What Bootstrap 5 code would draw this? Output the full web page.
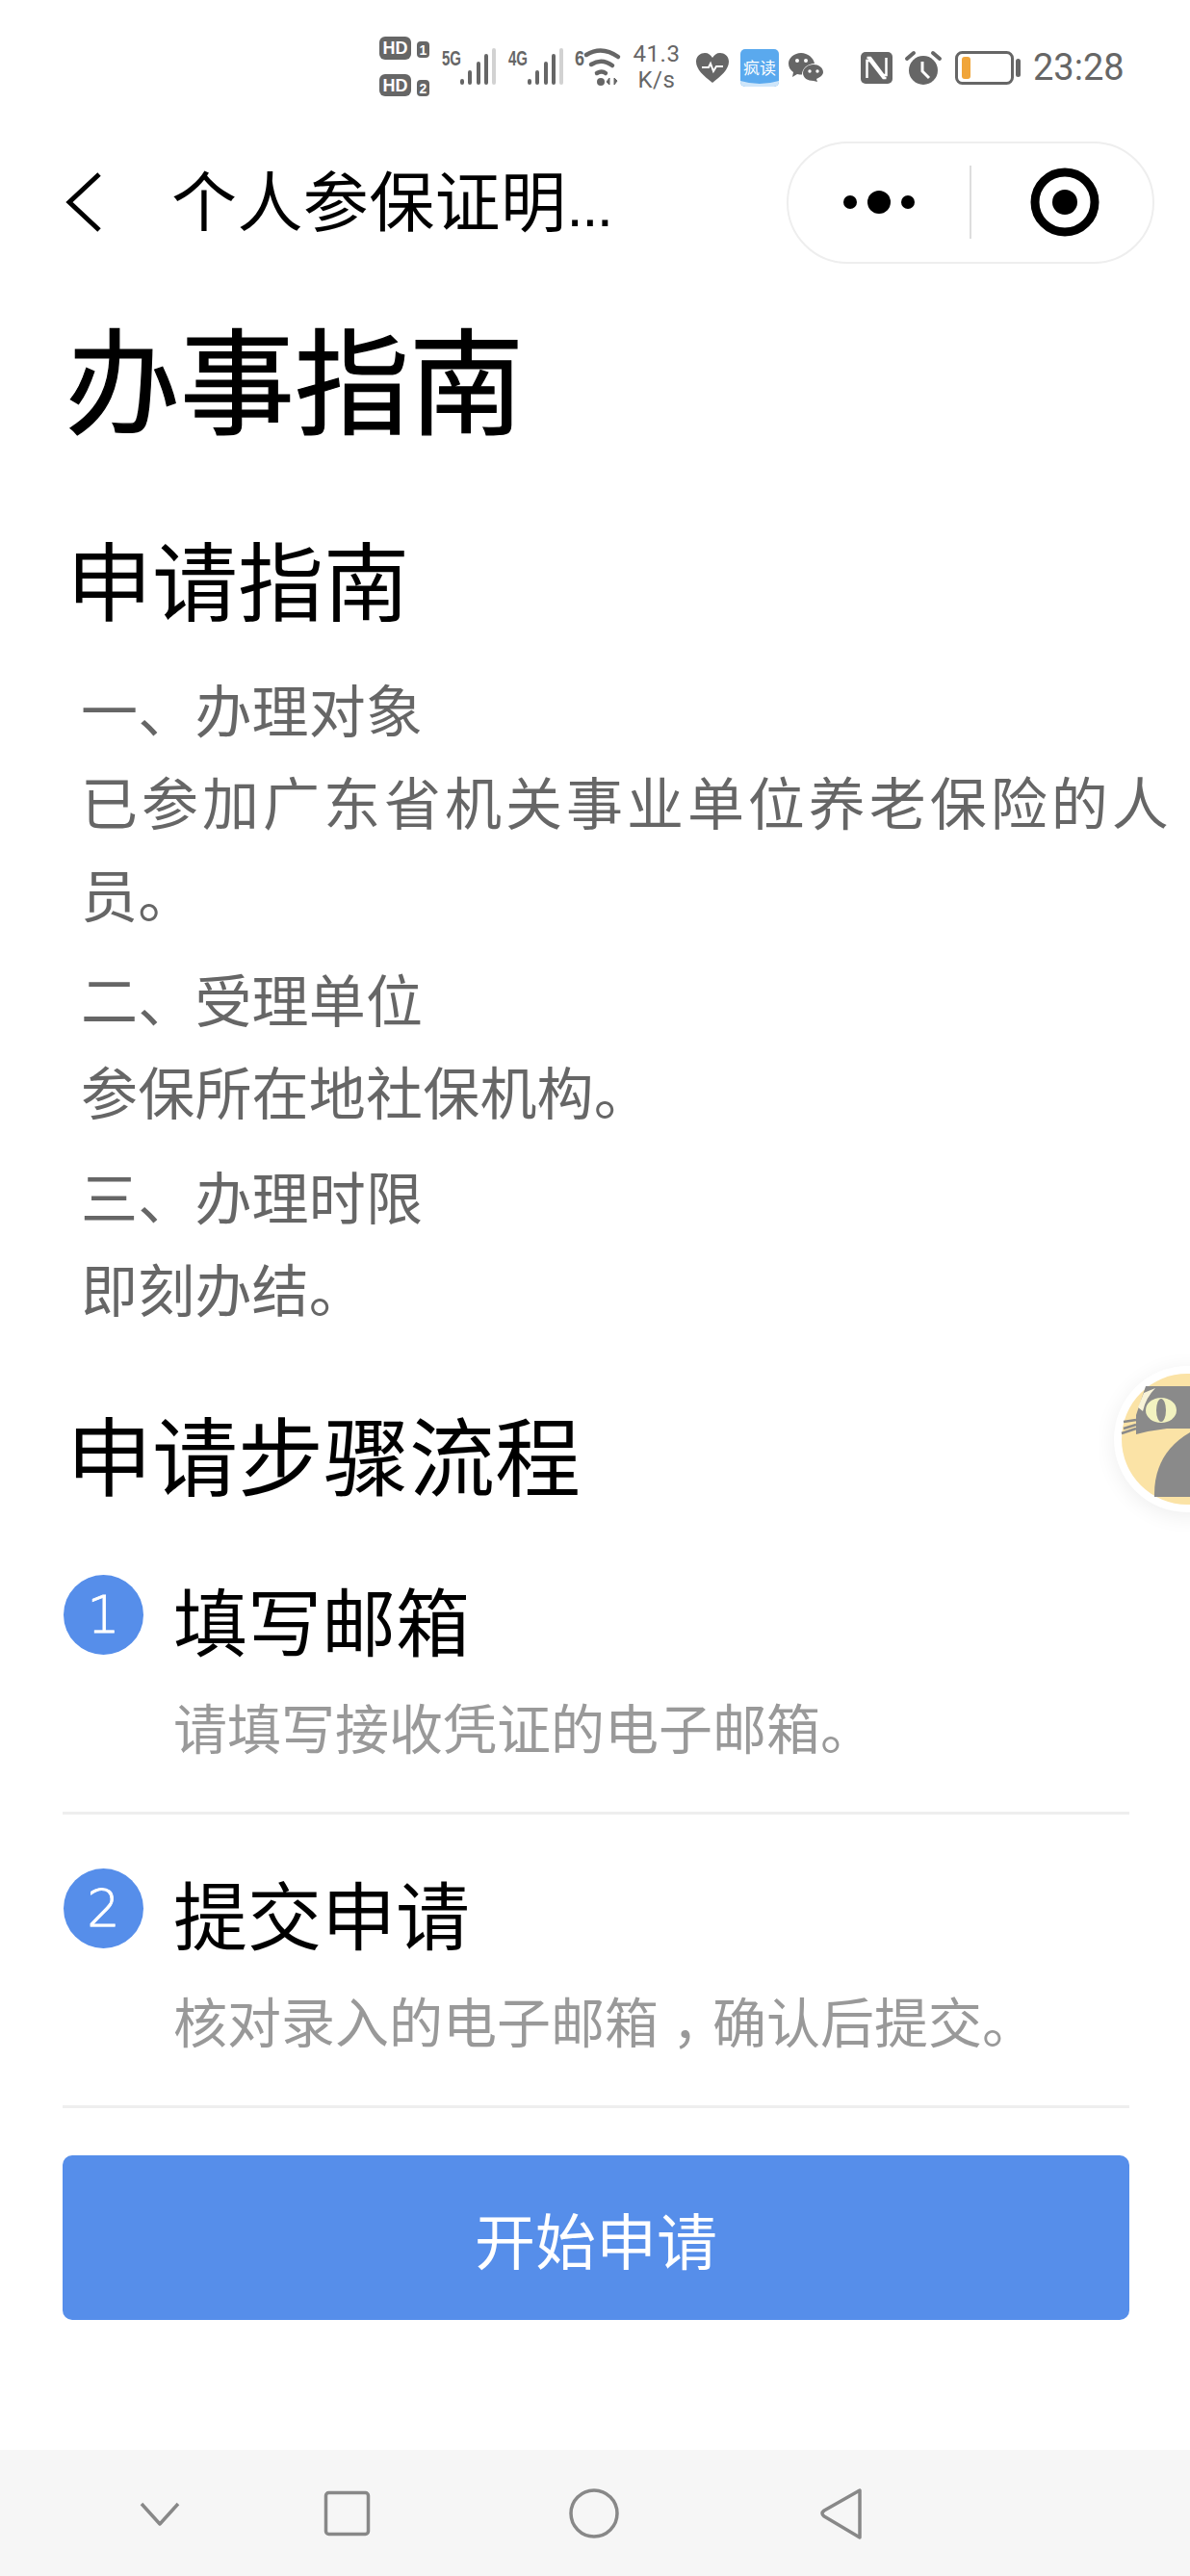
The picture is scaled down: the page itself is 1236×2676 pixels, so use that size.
<!DOCTYPE html>
<html lang="zh-CN">
<head>
    <meta charset="UTF-8">
    <meta name="viewport" content="width=device-width, initial-scale=1.0">
    <title>办事指南</title>
    <link href="https://cdn.jsdelivr.net/npm/bootstrap@5.3.0/dist/css/bootstrap.min.css" rel="stylesheet">
    <style>
        html, body { height: 100%; }
        body {
            background: #fff;
            color: #000;
            font-family: "Noto Sans CJK SC", "Liberation Sans", sans-serif;
            overflow: hidden;
        }
        .page-wrap { height: 2676px; position: relative; overflow: hidden; }

        /* status bar */
        .status-strip { height: 140px; padding-right: 68px; color: #666; }
        .status-strip svg { display: block; flex: none; overflow: visible; }
        .status-strip svg text { font-family: "Liberation Sans", sans-serif; fill: #666; }
        .ml-10 { margin-left: 10px; }
        .ml-12 { margin-left: 12px; }
        .ml-13 { margin-left: 13px; }
        .ml-14 { margin-left: 14px; }
        .ml-16 { margin-left: 16px; }
        .ml-38 { margin-left: 38px; }
        .net-speed {
            width: 50px; margin-left: 14px; text-align: center; white-space: nowrap;
            font: 24px/27px Roboto, sans-serif; color: #666; letter-spacing: .5px;
        }
        .clock-text { font: 38px/1 Roboto, sans-serif; color: #666; margin-left: 13px; width: 95px; }

        /* mini program header */
        .nav-strip { height: 140px; padding-left: 68px; padding-right: 37px; }
        .nav-title { font-size: 68px; line-height: 90px; margin-left: 72px; white-space: nowrap; letter-spacing: .4px; }
        .nav-title span { font-family: "Liberation Sans", sans-serif; font-size: 62px; letter-spacing: -1.5px; }
        .capsule {
            width: 382px; height: 127px; border: 2px solid #eee; border-radius: 64px; background: #fff;
        }
        .capsule-part { width: 191px; height: 76px; }
        .capsule-rule { width: 2px; height: 76px; background: #ddd; }
        .capsule-part.target-part { padding-left: 6px; }

        /* content */
        .guide-body { padding-left: 65px; }
        .guide-title {
            font-size: 119px; line-height: 130px; font-weight: 400; margin: 45px 0 0 3px;
            -webkit-text-stroke: 1.2px #000;
        }
        .guide-sub { font-size: 89px; line-height: 100px; font-weight: 400; margin: 95px 0 0 4px; }
        .guide-sub.next-sub { margin-top: 73px; }
        .guide-text { padding: 0 22px 0 19px; margin-top: 38px; }
        .guide-text p {
            font-size: 59px; line-height: 96px; letter-spacing: .2px; color: #666; margin: 0 0 13px;
            text-align: justify;
        }
        .step-list { width: 1108px; margin-top: 17px; }
        .step-list .list-group-item {
            padding: 60px 0 54px; border: 0; border-bottom: 3px solid #eee; background: transparent; color: #000;
        }
        .step-list .list-group-item:last-child { border-bottom: 3px solid #eee; }
        .step-list .list-group-item + .list-group-item { padding-top: 56px; }
        .step-dot {
            width: 83px; height: 83px; background: #568eea; color: #fff; flex: none; margin-left: 1px;
            font: 200 54px/1 "DejaVu Sans", sans-serif; -webkit-text-stroke: .8px #fff;
        }
        .step-copy { margin: 1px 0 0 31px; }
        .step-name { font-size: 77px; line-height: 90px; }
        .step-desc { font-size: 56px; line-height: 70px; color: #999; margin-top: 31px; white-space: nowrap; }
        .comma-mid { font-feature-settings: "halt"; margin: 0 .25em; }
        .start-btn {
            width: 1108px; height: 171px; margin-top: 49px; border: 0; border-radius: 10px;
            background: #568eea; color: #fff; font-size: 63px; line-height: 1;
        }
        .start-btn:hover { background: #568eea; color: #fff; }

        /* floating cat */
        .cat-float {
            position: absolute; left: 1157px; top: 1419px; width: 152px; height: 152px;
            background: #fff; box-shadow: 0 4px 22px rgba(0,0,0,.07); overflow: hidden;
        }
        .cat-float svg { display: block; }

        /* android keys */
        .key-strip {
            position: absolute; left: 0; right: 0; bottom: 0; height: 131px; background: #f6f6f6;
        }
    </style>
</head>
<body>
<div class="page-wrap">

    <div class="status-strip d-flex align-items-center justify-content-end">
        <svg width="52" height="64" viewBox="0 0 52 64">
            <rect x="0" y="0" width="33" height="24" rx="6" fill="#666"/>
            <text x="16.5" y="18" font-size="18" font-weight="700" text-anchor="middle" style="fill:#fff">HD</text>
            <rect x="39" y="5" width="13" height="17" rx="4" fill="#666"/>
            <text x="45.5" y="19" font-size="14" font-weight="700" text-anchor="middle" style="fill:#fff">1</text>
            <rect x="0" y="39" width="33" height="23" rx="6" fill="#666"/>
            <text x="16.5" y="57" font-size="18" font-weight="700" text-anchor="middle" style="fill:#fff">HD</text>
            <rect x="39" y="45" width="13" height="17" rx="4" fill="#666"/>
            <text x="45.5" y="59" font-size="14" font-weight="700" text-anchor="middle" style="fill:#fff">2</text>
        </svg>
        <svg class="ml-13" width="56" height="40" viewBox="0 0 56 40">
            <text x="0" y="18" font-size="22" font-weight="700" textLength="20" lengthAdjust="spacingAndGlyphs">5G</text>
            <g stroke="#666" stroke-width="4" stroke-linecap="round">
                <path d="M21 34v2M29 25v11M38 16v20M46 8v28"/>
                <path d="M54 2v34" stroke="#d2d2d2"/>
            </g>
        </svg>
        <svg class="ml-13" width="57" height="40" viewBox="0 0 57 40">
            <text x="0" y="18" font-size="22" font-weight="700" textLength="20" lengthAdjust="spacingAndGlyphs">4G</text>
            <g stroke="#666" stroke-width="4" stroke-linecap="round">
                <path d="M22 34v2M30 25v11M39 16v20M47 8v28"/>
                <path d="M55 2v34" stroke="#d2d2d2"/>
            </g>
        </svg>
        <svg class="ml-12" width="46" height="40" viewBox="0 0 46 40">
            <text x="0" y="18" font-size="22" font-weight="700" textLength="10" lengthAdjust="spacingAndGlyphs">6</text>
            <g fill="none" stroke="#666" stroke-width="4.5" stroke-linecap="round">
                <path d="M12 7Q28 -3 45 9"/>
                <path d="M17 17Q28 10 39 18"/>
                <path d="M23 26Q28 23 32 26"/>
            </g>
            <circle cx="27" cy="35" r="4" fill="#666"/>
            <path d="M36 38v-7l-3 4zM41 31v7l3-4z" fill="#666" stroke="#666" stroke-width="1"/>
        </svg>
        <div class="net-speed">41.3<br>K/s</div>
        <svg class="ml-16" width="34" height="31" viewBox="0 0 34 31">
            <path d="M17 31C8 24 0 17 0 9 0 3 5 0 9 0c4 0 6 2 8 5 2-3 4-5 8-5 4 0 9 3 9 9 0 8-8 15-17 22z" fill="#666"/>
            <path d="M6 15h7l2-4 3 8 3-5h7" fill="none" stroke="#fff" stroke-width="2"/>
        </svg>
        <svg class="ml-12" width="40" height="39" viewBox="0 0 40 39">
            <rect width="40" height="39" rx="5" fill="#5aa9ee"/>
            <path d="M0 33Q20 39 40 33V34a5 5 0 0 1-5 5H5a5 5 0 0 1-5-5z" fill="#cfe6fa"/>
            <text x="20" y="26" font-size="17" text-anchor="middle" style="fill:#fff;font-family:'Noto Sans CJK SC',sans-serif">疯读</text>
        </svg>
        <svg class="ml-10" width="37" height="30" viewBox="0 0 37 30">
            <path d="M13 0C6 0 0 5 0 11c0 4 2 7 5 9l-1 5 5-3c2 .5 3 .5 5 .5C14 16 20 11 27 11 26 5 20 0 13 0z" fill="#666"/>
            <path d="M26 12c-6 0-11 4-11 9s5 8 11 8l4 1-1-3c4-2 7-4 7-7 0-5-5-8-10-8z" fill="#666"/>
            <circle cx="9" cy="8" r="2" fill="#fff"/><circle cx="18" cy="8" r="2" fill="#fff"/>
            <circle cx="22" cy="19" r="1.7" fill="#fff"/><circle cx="30" cy="19" r="1.7" fill="#fff"/>
        </svg>
        <svg class="ml-38" width="33" height="33" viewBox="0 0 33 33">
            <rect width="33" height="33" rx="5" fill="#666"/>
            <path d="M8 5.5l17 22" fill="none" stroke="#fff" stroke-width="2.5"/>
            <path d="M6.5 27V9l3 0 14 18h3" fill="none" stroke="#fff" stroke-width="2.5"/>
            <path d="M26.5 6v18l-3 0L10 6H6.5" fill="none" stroke="#fff" stroke-width="2.5"/>
        </svg>
        <svg class="ml-13" width="38" height="36" viewBox="0 0 38 36">
            <circle cx="19" cy="21" r="15" fill="#666"/>
            <path d="M18 12v10l7 7" fill="none" stroke="#fff" stroke-width="3"/>
            <path d="M2 9l7-6M36 9l-7-6" stroke="#666" stroke-width="4" stroke-linecap="round"/>
        </svg>
        <svg class="ml-14" width="68" height="35" viewBox="0 0 68 35">
            <rect x="1.5" y="1.5" width="58" height="32" rx="6" fill="#fff" stroke="#666" stroke-width="3"/>
            <rect x="7" y="6" width="9" height="23" rx="3" fill="#f0a53a"/>
            <rect x="63" y="8" width="5" height="19" rx="2.5" fill="#666"/>
        </svg>
        <div class="clock-text">23:28</div>
    </div>

    <div class="nav-strip d-flex align-items-center">
        <svg width="38" height="62" viewBox="0 0 38 62" class="flex-none">
            <path d="M35 2L4 31l31 29" fill="none" stroke="#000" stroke-width="5"/>
        </svg>
        <div class="nav-title">个人参保证明<span>...</span></div>
        <div class="capsule ms-auto d-flex align-items-center">
            <div class="capsule-part d-flex align-items-center justify-content-center">
                <svg width="74" height="26" viewBox="0 0 74 26">
                    <circle cx="7" cy="13" r="7"/><circle cx="37" cy="13" r="12"/><circle cx="67" cy="13" r="7"/>
                </svg>
            </div>
            <div class="capsule-rule"></div>
            <div class="capsule-part target-part d-flex align-items-center justify-content-center">
                <svg width="72" height="72" viewBox="0 0 72 72">
                    <circle cx="36" cy="36" r="31" fill="none" stroke="#000" stroke-width="9"/>
                    <circle cx="36" cy="36" r="13"/>
                </svg>
            </div>
        </div>
    </div>

    <div class="guide-body">
        <h1 class="guide-title">办事指南</h1>
        <h2 class="guide-sub">申请指南</h2>
        <div class="guide-text">
            <p>一、办理对象<br>已参加广东省机关事业单位养老保险的人员。</p>
            <p>二、受理单位<br>参保所在地社保机构。</p>
            <p>三、办理时限<br>即刻办结。</p>
        </div>
        <h2 class="guide-sub next-sub">申请步骤流程</h2>

        <ul class="list-group list-group-flush step-list">
            <li class="list-group-item d-flex align-items-start">
                <div class="step-dot rounded-circle d-flex align-items-center justify-content-center">1</div>
                <div class="step-copy">
                    <div class="step-name">填写邮箱</div>
                    <div class="step-desc">请填写接收凭证的电子邮箱。</div>
                </div>
            </li>
            <li class="list-group-item d-flex align-items-start">
                <div class="step-dot rounded-circle d-flex align-items-center justify-content-center">2</div>
                <div class="step-copy">
                    <div class="step-name">提交申请</div>
                    <div class="step-desc">核对录入的电子邮箱<span class="comma-mid">，</span>确认后提交。</div>
                </div>
            </li>
        </ul>

        <button type="button" class="btn start-btn d-block">开始申请</button>
    </div>

    <div class="cat-float rounded-circle">
        <svg width="152" height="152" viewBox="1157 1419 152 152">
            <circle cx="1233" cy="1495" r="68" fill="#fbe3a6"/>
            <path d="M1190 1440H1240V1484H1212Q1195 1486 1180 1490L1180 1470Z" fill="#8a8a8a"/>
            <path d="M1182 1462L1188 1447 1200 1442Q1190 1452 1187 1466Z" fill="#f8f3d8"/>
            <ellipse cx="1206" cy="1465" rx="16" ry="13" fill="#f2f2c0"/>
            <ellipse cx="1206" cy="1465" rx="5" ry="12" fill="#8a8a8a"/>
            <path d="M1199 1555Q1198 1510 1236 1488V1555Z" fill="#8a8a8a"/>
            <path d="M1180 1475L1167 1477M1180 1480L1167 1484M1180 1484L1165 1489" stroke="#8a8a8a" stroke-width="2.5"/>
        </svg>
    </div>

    <div class="key-strip">
        <svg width="1236" height="131" viewBox="0 2545 1236 131">
            <g fill="none" stroke="#888" stroke-width="3.5" stroke-linejoin="round">
                <path d="M147 2601L166 2622 185 2601"/>
                <rect x="338.5" y="2589.5" width="44" height="43" rx="3"/>
                <circle cx="617" cy="2611" r="24"/>
                <path d="M893 2587V2636L856 2614Q852 2611 856 2608Z"/>
            </g>
        </svg>
    </div>
</div>
<script src="https://cdn.jsdelivr.net/npm/bootstrap@5.3.0/dist/js/bootstrap.bundle.min.js"></script>
</body>
</html>
